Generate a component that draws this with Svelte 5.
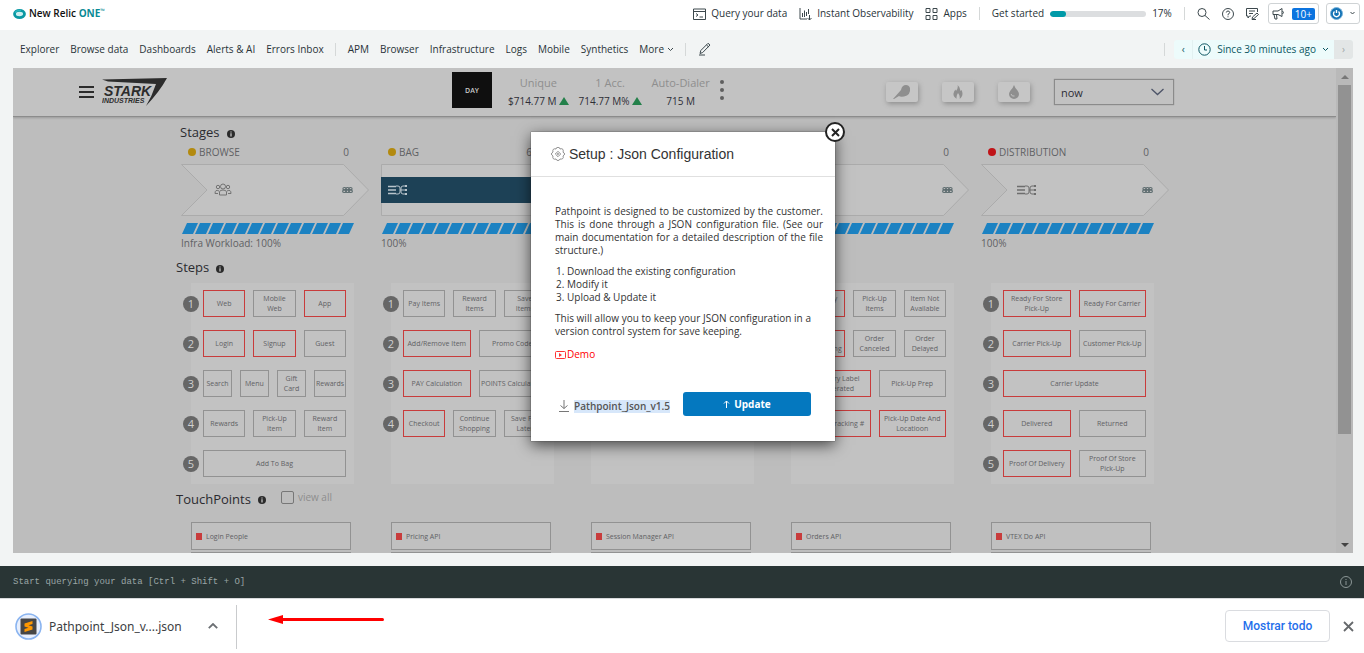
<script>
  const navMain = ['Explorer', 'Browse data', 'Dashboards', 'Alerts & AI', 'Errors Inbox'];
  const navMore = ['APM', 'Browser', 'Infrastructure', 'Logs', 'Mobile', 'Synthetics'];

  const kpis = [
    { name: 'Unique', value: '$714.77 M', up: true },
    { name: '1 Acc.', value: '714.77 M%', up: true },
    { name: 'Auto-Dialer', value: '715 M', up: false }
  ];

  // A step is [label, alert]
  const stages = [
    {
      title: 'BROWSE', status: 'warn', count: '0', icon: 'people', workload: 'Infra Workload: 100%', touch: 'Login People',
      steps: [
        [['Web', 1], ['Mobile\nWeb', 0], ['App', 1]],
        [['Login', 1], ['Signup', 1], ['Guest', 0]],
        [['Search', 0], ['Menu', 0], ['Gift\nCard', 0], ['Rewards', 0]],
        [['Rewards', 0], ['Pick-Up\nItem', 0], ['Reward\nItem', 0]],
        [['Add To Bag', 0]]
      ]
    },
    {
      title: 'BAG', status: 'warn', count: '6512', icon: 'flow', active: true, workload: '100%', touch: 'Pricing API',
      steps: [
        [['Pay Items', 0], ['Reward\nItems', 0], ['Save\nItems', 0]],
        [['Add/Remove Item', 1], ['Promo Code', 0]],
        [['PAY Calculation', 1], ['POINTS\u00a0Calculation', 0]],
        [['Checkout', 1], ['Continue\nShopping', 0], ['Save For\nLater', 0]]
      ]
    },
    { touch: 'Session Manager API', steps: [] },
    {
      count: '0', touch: 'Orders API',
      steps: [
        [['Delivery\nDate', 1], ['Pick-Up\nItems', 0], ['Item Not\nAvailable', 0]],
        [['Order\nProcessing', 1], ['Order\nCanceled', 0], ['Order\nDelayed', 0]],
        [['Delivery Label\nGenerated', 1], ['Pick-Up Prep', 0]],
        [['Order Tracking #', 1], ['Pick-Up Date And\nLocatioon', 1]]
      ]
    },
    {
      title: 'DISTRIBUTION', status: 'bad', count: '0', icon: 'flow', workload: '100%', touch: 'VTEX Do API',
      steps: [
        [['Ready For Store\nPick-Up', 1], ['Ready For Carrier', 1]],
        [['Carrier Pick-Up', 1], ['Customer Pick-Up', 0]],
        [['Carrier Update', 1]],
        [['Delivered', 1], ['Returned', 0]],
        [['Proof Of Delivery', 1], ['Proof Of Store\nPick-Up', 0]]
      ]
    }
  ];
  const stripes = Array.from({ length: 13 }, (_, i) => i * 13);
</script>

{#snippet info()}
  <svg class="info" width="8" height="8" viewBox="0 0 8 8"><circle cx="4" cy="4" r="4" fill="#2b2b2b" /><path d="M4 1.400v1.200M4 3.200v3.200" stroke="#d0d0d0" stroke-width="1.200" fill="none" /></svg>
{/snippet}

<div class="page">
  <header class="top">
    <a class="brand" href="#home">
      <svg width="13" height="10" viewBox="0 0 13 10"><ellipse cx="6.5" cy="5" rx="5" ry="3.6" fill="#cdeff0" stroke="#0a98a3" stroke-width="2.8" /><path d="M2 3.5Q4 1 8 1.4" stroke="#27b7bd" stroke-width="1.4" fill="none" /></svg>
      <span>New Relic <b>ONE</b><sup>™</sup></span>
    </a>
    <div class="tools">
      <a class="tool" href="#query">
        <svg width="13" height="12" viewBox="0 0 13 12"><path d="M.5 1h12v10.500h-12zM.5 3.500h12M3 5.500l2 1.500-2 1.500M6.500 9h3.500" /></svg>Query your data
      </a>
      <a class="tool obs" href="#observability">
        <svg width="13" height="12" viewBox="0 0 13 12"><path d="M1 0v11h7M3.500 9V5M5.500 9V2.500M7.500 8V4M9.500 6V1M10.500 7v5M8.500 10l2 2 2-2" /></svg>Instant Observability
      </a>
      <a class="tool" href="#apps">
        <svg width="13" height="12" viewBox="0 0 13 12"><path d="M1 .5h4v4H1zM8 .5h4v4H8zM1 7.500h4v4H1zM8 7.500h4v4H8z" /></svg>Apps
      </a>
      <i class="sep"></i>
      <span class="started">Get started <span class="meter"><span style="width: 17%"></span></span> 17%</span>
      <i class="sep"></i>
      <button class="ico" aria-label="Search"><svg width="13" height="12" viewBox="0 0 13 12"><circle cx="5" cy="4.500" r="4" /><path d="M8 7.500l4.500 4" /></svg></button>
      <button class="ico" aria-label="Help"><svg width="12" height="12" viewBox="0 0 12 12"><circle cx="6" cy="6" r="5.500" /><path d="M4.300 4.500Q4.500 3 6 3t1.700 1.400Q7.700 5.500 6 6.300v1M6 8.300v1" /></svg></button>
      <button class="ico" aria-label="Feedback"><svg width="13" height="12" viewBox="0 0 13 12"><path d="M5 8H3.500L2 10V8H.5V.5h11V4M3 3h6M3 5.500h4M6 11.500l.5-2.500 4.500-4 1.500 1.500-4.500 4zM6 11.500h4" /></svg></button>
      <button class="boxed" aria-label="News">
        <svg width="13" height="12" viewBox="0 0 13 12"><path d="M1 3h5l4-2.500v8L6 6.500H1zM2 6.500l1 4.500h2l-.5-4.500M10.500 3q2 1.500 0 3" /></svg><span class="badge">10+</span>
      </button>
      <button class="boxed user" aria-label="Account">
        <svg width="13" height="13" viewBox="0 0 13 13"><circle cx="6.500" cy="6.500" r="6" fill="#1272b5" stroke="#7ab3da" /><path d="M4.500 4.500a3 3 0 1 0 4 0M6.500 3v3" stroke="#fff" stroke-width="1.400" /></svg>
        <svg width="7" height="5" viewBox="0 0 7 5"><path d="M1.500 1l2 2 2-2" /></svg>
      </button>
    </div>
  </header>

  <nav class="nav">
    {#each navMain as n}<a href="#{n}">{n}</a>{/each}
    <i class="sep"></i>
    {#each navMore as n}<a href="#{n}">{n}</a>{/each}
    <button class="more">More <svg width="7" height="5" viewBox="0 0 7 5"><path d="M1 1l2.500 2.500L6 1" /></svg></button>
    <i class="sep"></i>
    <button class="ico" aria-label="Edit"><svg width="13" height="14" viewBox="0 0 13 14"><path d="M2 11.500l.8-3L10 1.300l2 1.700-7.300 7.500zM8.500 3l2 1.800M1 13h6" /></svg></button>
    <div class="time">
      <i class="sep"></i>
      <div class="picker">
        <button class="prev" aria-label="Earlier">‹</button>
        <button class="range">
          <svg width="13" height="13" viewBox="0 0 13 13"><circle cx="6.500" cy="6.500" r="5.700" /><path d="M6.500 3v4H9" /></svg>
          Since 30 minutes ago
          <svg width="7" height="5" viewBox="0 0 7 5"><path d="M1 1l2.500 2.500L6 1" /></svg>
        </button>
        <button class="next" aria-label="Later">›</button>
      </div>
    </div>
  </nav>

  <main class="frame">
    <div class="view">
      <div class="bar">
        <div class="left">
          <button class="burger" aria-label="Menu"><i></i><i></i><i></i></button>
          <svg class="stark" width="66" height="30" viewBox="0 0 66 30" fill="#2c2c2c">
            <path d="M0 2.500L65 1Q58 14 44 29Q50 19 54 7L6 4.500z" />
            <text x="2" y="19" font-size="14">STARK</text>
            <text x="0" y="26" font-size="7">INDUSTRIES</text>
          </svg>
        </div>
        <div class="kpis">
          <button class="day">DAY</button>
          {#each kpis as k}
            <div class="kpi">
              <span class="kn">{k.name}</span>
              <span class="kv">{k.value}{#if k.up}<i class="tri"></i>{/if}</span>
            </div>
          {/each}
          <button class="dots" aria-label="Options"><i></i><i></i><i></i></button>
        </div>
        <div class="right">
          <button class="chip" aria-label="Canary"><svg width="18" height="14" viewBox="0 0 18 14"><path d="M0 14L8 5Q9 0 13 0q3 0 4 3 1 7-6 8.500-4 .5-5-.5l-5 3z" /></svg></button>
          <button class="chip" aria-label="Fire"><svg width="10" height="14" viewBox="0 0 10 14"><path d="M4.500 0Q8 3 7 6l1.500-1Q10.500 9 8.500 12q-1 1.500-2 1.800Q7.500 11 5 8 3 11 3.700 13.800 0 12 .5 8.500 1 6 2.500 4.500L3 6Q5.500 3 4.500 0z" /></svg></button>
          <button class="chip" aria-label="Drop"><svg width="12" height="14" viewBox="0 0 12 14"><path d="M6 0q1 3 3.500 5.500Q11 7.500 11 9a5 5 0 0 1-10 0q0-1.500 1.500-3.500Q5 3 6 0z" /><path d="M3 9q1 3 3.500 2" stroke="#c2c2c2" fill="none" /></svg></button>
          <div class="sel">
            <select aria-label="Time"><option>now</option></select>
            <svg width="13" height="8" viewBox="0 0 13 8"><path d="M.5 1l6 5.500 6-5.500" stroke="#4d5468" stroke-width="1.300" fill="none" /></svg>
          </div>
        </div>
      </div>

      <div class="board">
        <h2 class="st">Stages {@render info()}</h2>
        <div class="cols">
          {#each stages as s}
            <section class="stage">
              <div class="head">
                {#if s.title}<i class="dot {s.status}"></i><span>{s.title}</span>{/if}
                <span class="count">{s.count ?? ''}</span>
              </div>
              <div class="arrow">
                <svg width="188" height="52" viewBox="0 0 188 52">
                  <path d={s.active ? 'M.5.5H188V51.500H.5z' : 'M.5.5H162.500L187.500 26L162.500 51.500H.5L26 26z'} fill="#c2c2c2" stroke="#ababab" />
                  {#if s.active}<path d="M0 13h188v26H0z" fill="#1d4156" />{/if}
                  {#if s.icon === 'people'}
                    <g fill="none" stroke="#737373"><circle cx="42" cy="22.500" r="2.500" /><circle cx="37" cy="23" r="1.700" /><circle cx="47" cy="23" r="1.700" /><path d="M38.500 31v-3q0-2 3.500-2t3.500 2v3zM38 27q-4-2-4 2.500h3M46 27q4-2 4 2.500h-3" /></g>
                  {:else if s.icon}
                    <g fill="none" stroke={s.active ? '#b9c4cb' : '#6d6d6d'} transform={s.active ? 'translate(-29 0)' : ''}><path d="M36 22.500h8M36 26h8M36 29.500h8" stroke-width="1.600" /><path d="M44 22h2q2 0 2 2v4q0 2-2 2h-2M48 26h5M55 22h-4q-2 0-2 2v4q0 2 2 2h4" /><path d="M53 26h2M53 22h2M53 30h2" stroke-width="2" /></g>
                  {/if}
                  {#if !s.active}
                    <g fill="none" stroke="#5c6b6e" stroke-width="1.100"><ellipse cx="163.500" cy="24.700" rx="1.600" ry="1.200" /><ellipse cx="163.500" cy="27.200" rx="1.900" ry="1.300" /><ellipse cx="166.500" cy="24.700" rx="1.600" ry="1.200" /><ellipse cx="166.500" cy="27.200" rx="1.900" ry="1.300" /><ellipse cx="169.500" cy="24.700" rx="1.600" ry="1.200" /><ellipse cx="169.500" cy="27.200" rx="1.900" ry="1.300" /></g>
                  {/if}
                </svg>
              </div>
              <svg class="stripes" width="173" height="11" viewBox="0 0 173 11">
                {#each stripes as x}<path d="M{x} 11l5-11h11l-5 11z" fill="#1c82c2" />{/each}
              </svg>
              <div class="load">{s.workload ?? ''}</div>
            </section>
          {/each}
        </div>

        <h2>Steps {@render info()}</h2>
        <div class="cols">
          {#each stages as s}
            <section class="panel">
              {#each s.steps as row, i}
                <div class="row">
                  <span class="num">{i + 1}</span>
                  {#each row as [label, alert]}
                    <button class="step" class:alert>{label}</button>
                  {/each}
                </div>
              {/each}
            </section>
          {/each}
        </div>

        <h2 class="tp">TouchPoints {@render info()}
          <label><input type="checkbox" />view all</label>
        </h2>
        <div class="cols">
          {#each stages as s}
            <section class="touches">
              <button class="touch"><i></i>{s.touch}</button>
              <div class="touch"></div>
            </section>
          {/each}
        </div>
      </div>
    </div>

    <div class="scroll">
      <i class="up"></i>
      <span class="thumb"></span>
      <i class="down"></i>
    </div>

    <div class="modal" role="dialog" aria-labelledby="mt">
      <button class="close" aria-label="Close"><svg width="9" height="9" viewBox="0 0 9 9"><path d="M1 1l7 7M8 1L1 8" stroke="#222" stroke-width="2" /></svg></button>
      <div class="mhead">
        <svg width="14" height="14" viewBox="0 0 14 14" fill="none" stroke="#777" stroke-width=".8"><path d="M5.500.8Q7-.2 8.500.8L9 2l1.800-.3q1.700.5 1.500 2.200L12 5.200l1.200.8q.8 1 0 2L12 9l.3 1.500q-.3 1.500-2 1.600L9 12l-.8 1.200q-1.200.6-2.400 0L5 12l-1.500.2q-1.500-.2-1.700-1.700L2 9 .8 8Q0 7 .8 6L2 5l-.2-1.500Q2 2 3.500 1.800L5 2z" /><path d="M7 4.300L9.700 7 7 9.700 4.300 7zM7 6.200l.8.8-.8.8-.8-.8z" /></svg>
        <h1 id="mt">Setup : Json Configuration</h1>
      </div>
      <div class="mbody">
        <p class="lead">Pathpoint is designed to be customized by the customer. This is done through a JSON configuration file. (See our main documentation for a detailed description of the file structure.)</p>
        <ol>
          <li>Download the existing configuration</li>
          <li>Modify it</li>
          <li>Upload &amp; Update it</li>
        </ol>
        <p>This will allow you to keep your JSON configuration in a version control system for save keeping.</p>
        <a class="demo" href="#demo"><svg width="11" height="8" viewBox="0 0 11 8"><rect x=".5" y=".5" width="10" height="7" rx="1" fill="none" stroke="#f33" /><path d="M4 2l3 2-3 2z" fill="#f33" /></svg>Demo</a>
        <div class="acts">
          <a class="dl" href="#download"><svg width="10" height="12" viewBox="0 0 10 12"><path d="M5 0v8.500M1.500 5.500L5 8.500l3.500-3M0 11.500h10" fill="none" stroke="#777" /></svg><span>Pathpoint_Json_v1.5</span></a>
          <button class="update"><svg width="7" height="8" viewBox="0 0 7 8"><path d="M3.500 8V1M1 3.500L3.500 1 6 3.500" fill="none" stroke="#fff" /></svg>Update</button>
        </div>
      </div>
    </div>
  </main>

  <div class="query">
    <span>Start querying your data [Ctrl + Shift + O]</span>
    <svg width="12" height="12" viewBox="0 0 12 12" fill="none" stroke="#8c9797"><circle cx="6" cy="6" r="5.500" /><path d="M6 5v4M6 3v1" /></svg>
  </div>

  <footer class="shelf">
    <button class="file">
      <svg width="27" height="27" viewBox="0 0 27 27"><circle cx="13.500" cy="13.500" r="12.500" fill="#e8effc" stroke="#8ab4f0" stroke-width="1.600" /><rect x="5.500" y="5.500" width="16" height="16" rx="1" fill="#464646" /><path d="M9.500 10.500l8-2.500v3l-4 1.200 4 1.300v3l-8 2.500v-3l4-1.300-4-1.200z" fill="#ff9800" /></svg>
      <span>Pathpoint_Json_v....json</span>
    </button>
    <button class="ico" aria-label="File options"><svg width="10" height="6" viewBox="0 0 10 6"><path d="M.8 5.200L5 1l4.200 4.200" stroke="#6b6f73" stroke-width="1.800" /></svg></button>
    <i class="vr"></i>
    <svg class="pointer" width="116" height="9" viewBox="0 0 116 9"><path d="M0 4.500L15 0v9z" fill="#f00" /><path d="M13 4.500h101.500" stroke="#f00" stroke-width="3" stroke-linecap="round" /></svg>
    <button class="all">Mostrar todo</button>
    <button class="ico" aria-label="Close downloads"><svg width="11" height="11" viewBox="0 0 11 11"><path d="M1 1l9 9M10 1l-9 9" stroke="#66696c" stroke-width="1.800" /></svg></button>
  </footer>
</div>

<style>
  :global(body) { margin: 0; }
  .page { height: 100vh; display: flex; flex-direction: column; background: #f2f4f4; color: #293338; font: 10px/13px "Open Sans", sans-serif; overflow: hidden; }
  .page * { box-sizing: border-box; }
  button { font: inherit; color: inherit; background: none; border: 0; padding: 0; margin: 0; }
  a { color: inherit; text-decoration: none; }
  i { font-style: normal; display: block; }
  svg { display: block; flex: none; }
  h1, h2, p, ol { margin: 0; font-weight: 400; }
  .sep { width: 1px; height: 13px; background: #d5d8d8; }

  .top { height: 30px; flex: none; background: #fff; display: flex; align-items: center; justify-content: space-between; padding: 0 4px 3px 13px; }
  .top svg, .nav svg { fill: none; stroke: #3c484d; }
  .brand { display: flex; align-items: center; gap: 3px; font-weight: 600; color: #111; }
  .brand span { white-space: nowrap; }
  .brand b { color: #0a8a94; font-weight: 700; }
  .brand sup { font-size: 6px; line-height: 1px; color: #0a8a94; }
  .brand svg { stroke: none; }
  .tools { display: flex; align-items: center; gap: 12px; }
  .tool { display: flex; align-items: center; gap: 5px; }
  .started { display: flex; align-items: center; gap: 6px; }
  .meter { width: 96px; height: 6px; border-radius: 3px; background: #dcdee0; overflow: hidden; }
  .meter span { display: block; height: 100%; background: #009aa8; border-radius: 3px; }
  .boxed { height: 21px; border: 1px solid #cfd3d5; border-radius: 3px; display: flex; align-items: center; gap: 7px; padding: 0 3px; }
  .tools .boxed { margin-left: -3px; }
  .tools .user { margin-left: -5px; gap: 6px; }
  .badge { background: #0c74df; color: #fff; padding: 0 3px; border-radius: 2px; line-height: 12px; }

  .nav { height: 38px; flex: none; display: flex; align-items: center; gap: 11px; padding: 0 11px 0 20px; }
  .more { display: flex; align-items: center; gap: 3px; }
  .nav .sep { margin-right: 1px; }
  .time { margin-left: auto; display: flex; align-items: center; gap: 8px; }
  .picker { display: flex; height: 19px; border-radius: 3px; overflow: hidden; background: #edfbfb; color: #0b5561; }
  .picker svg { stroke: #0b5561; }
  .prev { width: 19px; border-right: 1px solid #e2f1f1; }
  .next { width: 19px; background: #e3e6e6; color: #a0a6a6; }
  .range { display: flex; align-items: center; gap: 6px; padding: 0 5px; }

  .frame { flex: 1; min-height: 0; margin: 0 11px 13px 13px; position: relative; display: flex; background: #bdbdbd; }
  .view { flex: 1; min-width: 0; overflow: hidden; }
  .bar { height: 49px; background: #c2c2c2; border-bottom: 1px solid #8c8c8c; box-shadow: 0 1px 2px #9a9a9a; display: grid; grid-template-columns: 439px 1fr auto; align-items: center; padding-right: 162px; }
  .left { display: flex; align-items: center; padding-left: 66px; gap: 8px; }
  .burger { display: grid; gap: 3px; width: 15px; }
  .burger i { height: 2px; background: #2c2c2c; }
  .stark text { font-family: "Liberation Sans", sans-serif; font-weight: 700; font-style: italic; }
  .kpis { display: flex; align-items: center; gap: 10px; color: #2e2e36; }
  .day { width: 40px; height: 36px; background: #0f0f0f; color: #c8c8c8; font-weight: 600; font-size: 7px; margin: 0 6px 4px 0; }
  .kpi { display: flex; flex-direction: column; align-items: center; gap: 6px; margin-bottom: 1px; }
  .kn { font-size: 11px; color: #8e8e8e; }
  .kv { display: flex; align-items: center; gap: 2px; }
  .tri { border: 5px solid transparent; border-top: 0; border-bottom: 8px solid #23804a; }
  .dots { display: grid; gap: 4px; margin-bottom: 4px; }
  .dots i { width: 4px; height: 4px; border-radius: 2px; background: #5f5f5f; }
  .right { display: flex; align-items: center; gap: 24px; }
  .chip { width: 32px; height: 20px; border-radius: 2px; background: #c6c6c6; box-shadow: 1px 2px 5px #8f8f8f; display: grid; place-items: center; fill: #8f8f8f; }
  .sel { position: relative; }
  .sel select { display: block; width: 120px; height: 26px; appearance: none; border: 1px solid #8b8b8b; outline: 0; border-radius: 0; background: transparent; font: 11px "Open Sans", sans-serif; color: #2c2c35; padding: 0 6px; box-shadow: 0 0 1px #8b8b8b; }
  .sel svg { position: absolute; right: 10px; top: 9px; }

  .board { width: 999px; margin: 0 auto; color: #5f6164; }
  h2 { display: flex; align-items: center; gap: 7px; font-size: 13px; line-height: 18px; color: #2b2b30; padding-left: 1px; }
  .st { padding: 6px 0 1px 5px; }
  .info { margin-top: 3px; }
  .cols { display: grid; grid-template-columns: repeat(5, 1fr); gap: 12px; padding: 0 5px 0 6px; }
  .stage, .touches { min-width: 0; }
  .head { display: flex; align-items: center; height: 22px; gap: 3px; padding: 0 20px 2px 7px; }
  .dot { width: 8px; height: 8px; border-radius: 4px; }
  .warn { background: #b38a0f; }
  .bad { background: #c01418; }
  .count { margin-left: auto; }
  .arrow { height: 52px; }
  .stripes { margin: 7px 0 0 1px; }
  .load { height: 24px; padding-top: 3px; }
  .panel { margin: 7px 15px 0 10px; padding: 7px 8px 7px 0; background: #c2c2c2; display: flex; flex-direction: column; gap: 13px; }
  .row { display: flex; height: 27px; gap: 8px; align-items: stretch; margin-left: -8px; }
  .num { width: 16px; height: 16px; border-radius: 8px; background: #666; color: #d0d0d0; font-size: 11px; line-height: 16px; text-align: center; align-self: center; flex: none; margin-right: -4px; }
  .step { flex: 1 1 0; border: 1px solid #929292; padding: 0 1px; font-size: 7px; line-height: 10px; text-align: center; white-space: pre; }
  .step.alert { border-color: #c83c3c; }
  .tp { padding-bottom: 2px; height: 31px; }
  .tp label { display: flex; align-items: center; gap: 4px; font-size: 10px; color: #8d8d8d; margin: -3px 0 0 8px; }
  .tp input { appearance: none; width: 13px; height: 13px; margin: 0; border: 1px solid #777; border-radius: 2px; }
  .touches { padding: 7px 18px 0 10px; display: grid; gap: 2px; }
  .touch { height: 28px; border: 1px solid #929292; display: flex; align-items: center; gap: 4px; padding-left: 4px; font-size: 7px; background: #c0c0c0; }
  .touch i { width: 6px; height: 7px; background: #c83c3c; }

  .scroll { width: 17px; flex: none; background: #b9b9b9; display: flex; flex-direction: column; align-items: center; padding: 7px 2px 6px; }
  .up { border: 4px solid transparent; border-top: 0; border-bottom-color: #777; }
  .down { border: 4px solid transparent; border-bottom: 0; border-top-color: #444; margin-top: auto; }
  .thumb { width: 13px; height: 74%; background: #929292; margin-top: 6px; }

  .modal { position: absolute; top: 64px; left: 50%; width: 304px; margin-left: -152px; background: #fff; box-shadow: 0 0 1px #333, 0 4px 14px rgba(0, 0, 0, .65); color: #333; }
  .close { position: absolute; right: -10px; top: -10px; width: 20px; height: 20px; border-radius: 50%; border: 2px solid #222; background: #fff; display: grid; place-items: center; }
  .mhead { display: flex; align-items: center; gap: 4px; height: 45px; padding: 0 20px; border-bottom: 1px solid #e0e0e0; }
  h1 { font: 14px/18px "Liberation Sans", sans-serif; color: #333; }
  .mbody { padding: 28px 24px 25px; }
  p { text-align: justify; }
  .lead { margin-right: -12px; }
  ol { padding: 8px 0 8px 12px; }
  .demo { display: flex; align-items: center; gap: 1px; color: #f00; margin-top: 10px; }
  .acts { display: flex; align-items: center; justify-content: space-between; margin-top: 31px; }
  .dl { display: flex; align-items: center; gap: 5px; padding: 4px 0 0 4px; font-weight: 600; color: #555; }
  .dl span { background: #d7e7fa; }
  .update { width: 128px; height: 24px; border-radius: 3px; background: #0478bf; color: #fff; font-weight: 700; display: flex; align-items: center; justify-content: center; gap: 4px; }

  .query { height: 32px; flex: none; background: #293535; color: #9aa5a5; display: flex; align-items: center; justify-content: space-between; padding: 0 12px 0 13px; font: 9px/13px "Liberation Mono", monospace; }
  .shelf { height: 55px; flex: none; background: #fff; border-top: 1px solid #d8dadc; display: flex; align-items: center; padding: 0 10px 0 15px; }
  .shelf svg { fill: none; }
  .file { display: flex; align-items: center; gap: 7px; font: 12px/18px "Noto Sans", sans-serif; color: #3c4043; margin-right: 26px; }
  .file span { padding-top: 2px; }
  .vr { width: 1px; height: 44px; background: #c9cbcd; margin: 2px 31px 0 18px; }
  .pointer { margin-bottom: 13px; }
  .all { margin-left: auto; margin-right: 13px; width: 105px; height: 32px; border: 1px solid #dadce0; border-radius: 4px; font: 500 12px Roboto, sans-serif; color: #1f6feb; }
</style>
